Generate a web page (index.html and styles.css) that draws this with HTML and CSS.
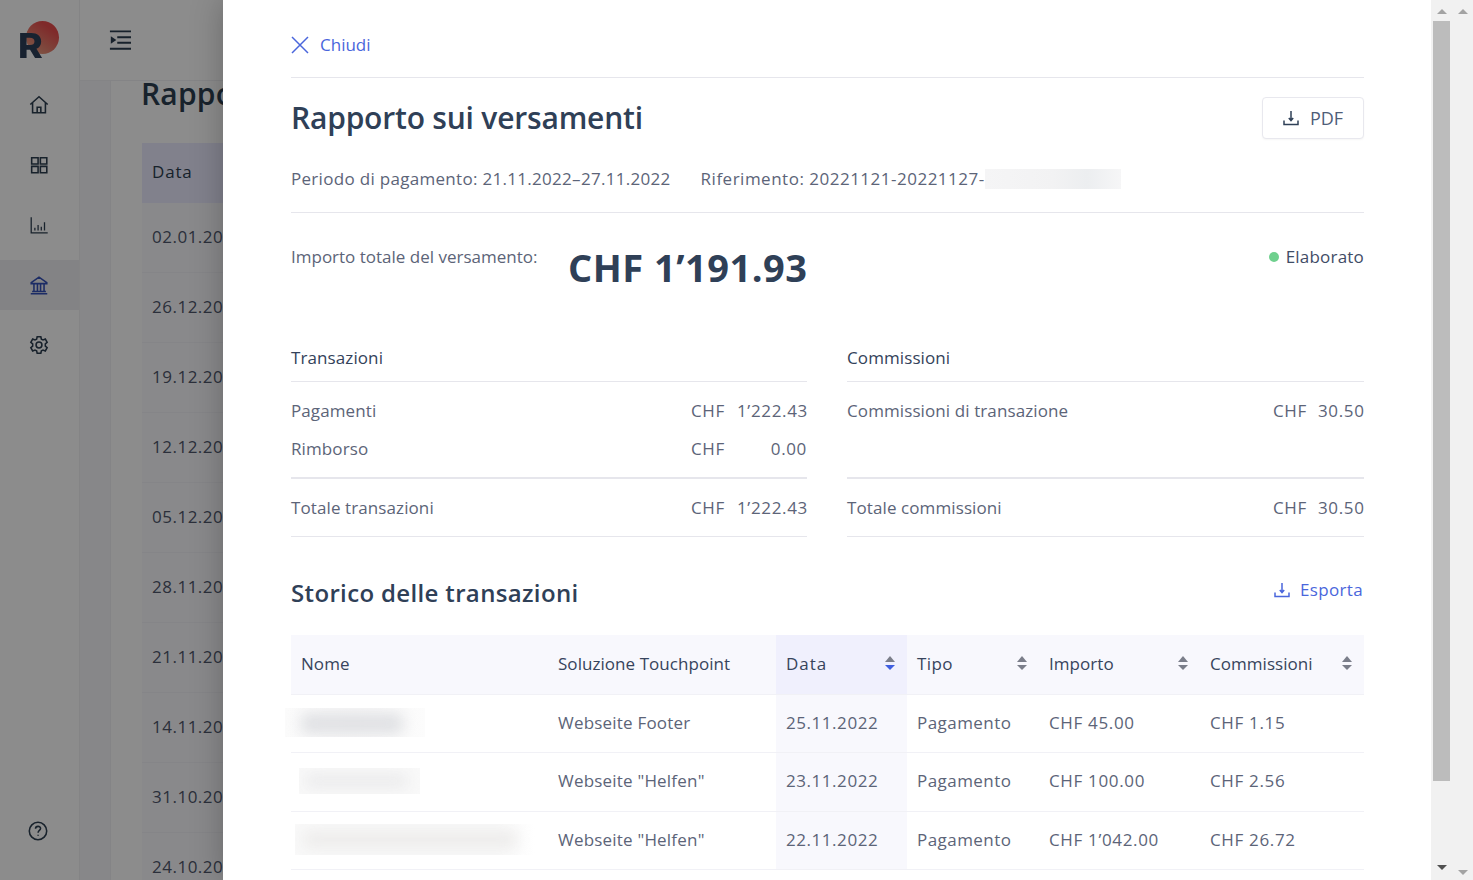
FILE: index.html
```html
<!DOCTYPE html>
<html lang="it">
<head>
<meta charset="utf-8">
<title>Rapporto sui versamenti</title>
<link rel="stylesheet" href="styles.css">
</head>
<body>
<div class="app">
  <aside class="sidebar">
    <div class="logo"><span class="logo-sun"></span><span class="logo-r">R</span></div>
    <a class="nav-item"><svg viewBox="0 0 24 24" class="nav-icon"><path d="M2.500 11.500 12 3l9.500 8.500M5 9.500V20.500h14V9.500M10 20.500v-6h4v6"/></svg></a>
    <a class="nav-item"><svg viewBox="0 0 24 24" class="nav-icon"><path d="M4 4h7v7H4zM13.500 4h7v7h-7zM4 13.500h7v7H4zM13.500 13.500h7v7h-7z"/></svg></a>
    <a class="nav-item"><svg viewBox="0 0 24 24" class="nav-icon thin"><path d="M3.500 3.500v17h18M7.500 18v-3M11 18v-6M14.500 18v-4M18 18V9"/></svg></a>
    <a class="nav-item active"><svg viewBox="0 0 24 24" class="nav-icon"><path d="M3.500 9.500 12 3.500l8.500 6v1h-17zM3 21.500h18M4.500 19h15M6.500 11v8M10.300 11v8M13.700 11v8M17.500 11v8"/></svg></a>
    <a class="nav-item"><svg viewBox="0 0 24 24" class="nav-icon"><circle cx="12" cy="12" r="3.200"/><path d="M10 3h4l.6 2.600 1.800.9 2.500-1 2 3.500-2 1.800v2.400l2 1.800-2 3.500-2.500-1-1.800.9L14 21h-4l-.6-2.600-1.800-.9-2.500 1-2-3.500 2-1.800v-2.400l-2-1.800 2-3.500 2.500 1 1.800-.9z"/></svg></a>
    <a class="nav-item help"><svg viewBox="0 0 24 24" class="nav-icon"><circle cx="12" cy="12" r="9.500"/><path d="M9.300 9.500c0-3.400 5.500-3.400 5.500-.2 0 2-2.700 2.200-2.700 4.500M12.100 16v1.200"/></svg></a>
  </aside>
  <div class="back">
    <header class="topbar"><svg viewBox="0 0 24 24" class="menu-icon"><path d="M1 2.500h23M9 9h15M9 15h15M1 21.500h23"/><path class="solid" d="M2 8l6 4-6 4z"/></svg></header>
    <div class="back-body">
      <div class="gutter"></div>
      <main class="back-main">
        <h1 class="back-title">Rapporti di versamento</h1>
        <div class="back-head">Data</div>
        <div class="back-cell">02.01.2023</div>
        <div class="back-cell">26.12.2022</div>
        <div class="back-cell">19.12.2022</div>
        <div class="back-cell">12.12.2022</div>
        <div class="back-cell">05.12.2022</div>
        <div class="back-cell">28.11.2022</div>
        <div class="back-cell">21.11.2022</div>
        <div class="back-cell">14.11.2022</div>
        <div class="back-cell">31.10.2022</div>
        <div class="back-cell">24.10.2022</div>
      </main>
    </div>
  </div>
</div>
<div class="overlay"></div>
<section class="drawer">
  <div class="drawer-close">
    <svg viewBox="0 0 18 18" class="close-icon"><path d="M1 1l16 16M17 1 1 17"/></svg>
    <span>Chiudi</span>
  </div>
  <div class="title-row">
    <h1 class="title">Rapporto sui versamenti</h1>
    <button class="pdf-btn"><svg viewBox="0 0 16 16" class="dl-icon"><path d="M8 1v9M5.800 8 8 10.500 10.200 8M1 10.500v4h14v-4"/></svg><span>PDF</span></button>
  </div>
  <div class="meta">
    <span>Periodo di pagamento: 21.11.2022–27.11.2022</span>
    <span class="meta-ref">Riferimento: 20221121-20221127-<span class="redact-ref"><i></i></span></span>
  </div>
  <div class="amount-row">
    <span class="amount-label">Importo totale del versamento:</span>
    <strong class="amount">CHF 1’191.93</strong>
    <span class="status"><i class="dot"></i>Elaborato</span>
  </div>
  <div class="summary">
    <div class="sum-col">
      <h2 class="sum-title">Transazioni</h2>
      <div class="sum-row first"><span>Pagamenti</span><span class="money"><span>CHF</span><span>1’222.43</span></span></div>
      <div class="sum-row"><span>Rimborso</span><span class="money"><span>CHF</span><span>0.00</span></span></div>
      <div class="sum-total"><span>Totale transazioni</span><span class="money"><span>CHF</span><span>1’222.43</span></span></div>
    </div>
    <div class="sum-col">
      <h2 class="sum-title">Commissioni</h2>
      <div class="sum-row first"><span>Commissioni di transazione</span><span class="money short"><span>CHF</span><span>30.50</span></span></div>
      <div class="sum-row"></div>
      <div class="sum-total"><span>Totale commissioni</span><span class="money short"><span>CHF</span><span>30.50</span></span></div>
    </div>
  </div>
  <div class="history-head">
    <h2 class="history-title">Storico delle transazioni</h2>
    <a class="export"><svg viewBox="0 0 16 16" class="dl-icon"><path d="M8 1v9M5.800 8 8 10.500 10.200 8M1 10.500v4h14v-4"/></svg><span>Esporta</span></a>
  </div>
  <table class="tx">
    <colgroup><col class="c1"><col class="c2"><col class="c3"><col class="c4"><col class="c5"><col class="c6"></colgroup>
    <thead>
      <tr>
        <th>Nome</th>
        <th>Soluzione Touchpoint</th>
        <th class="sorted"><div class="th-in"><span class="wide">Data</span><span class="sort on"></span></div></th>
        <th><div class="th-in"><span class="mid">Tipo</span><span class="sort"></span></div></th>
        <th><div class="th-in">Importo<span class="sort"></span></div></th>
        <th><div class="th-in">Commissioni<span class="sort"></span></div></th>
      </tr>
    </thead>
    <tbody>
      <tr>
        <td><div class="redact r1"><i></i></div></td><td>Webseite Footer</td><td class="sorted num">25.11.2022</td><td class="kind">Pagamento</td><td class="num">CHF 45.00</td><td class="num">CHF 1.15</td>
      </tr>
      <tr>
        <td><div class="redact r2"><i></i></div></td><td>Webseite "Helfen"</td><td class="sorted num">23.11.2022</td><td class="kind">Pagamento</td><td class="num">CHF 100.00</td><td class="num">CHF 2.56</td>
      </tr>
      <tr>
        <td><div class="redact r3"><i></i></div></td><td>Webseite "Helfen"</td><td class="sorted num">22.11.2022</td><td class="kind">Pagamento</td><td class="num">CHF 1’042.00</td><td class="num">CHF 26.72</td>
      </tr>
    </tbody>
  </table>
</section>
<div class="scrollbars">
  <div class="bar"><span class="arrow up"></span><span class="thumb"></span><span class="arrow down dark"></span></div>
  <div class="bar"><span class="arrow up"></span><span class="spacer"></span><span class="arrow down"></span></div>
</div>
</body>
</html>
```

FILE: styles.css
```css
* { box-sizing: border-box; }
html, body { margin: 0; height: 100%; }
body {
  width: 1473px; height: 880px; overflow: hidden; position: relative;
  font-family: "Open Sans", "Liberation Sans", sans-serif;
  font-size: 17px; color: #5c6478; background: #fff; letter-spacing: .2px;
}
h1, h2 { margin: 0; }

/* page behind the drawer */
.app { display: flex; height: 880px; width: 223px; overflow: hidden; }
.sidebar { flex: 0 0 80px; border-right: 1px solid #f0f0f2; display: flex; flex-direction: column; background: #fff; }
.logo { height: 75px; position: relative; }
.logo-sun { position: absolute; left: 26px; top: 21px; width: 33px; height: 33px; border-radius: 50%; background: linear-gradient(215deg, #e84e4e 25%, #e4a585 95%); }
.logo-r { position: absolute; left: 18px; top: 24px; font: 800 34px/44px Inter, sans-serif; color: #2c3e58; transform: scaleX(1.1); transform-origin: left center; }
.nav-item { height: 60px; display: flex; align-items: center; justify-content: center; padding-right: 1px; color: #2d3e50; }
.nav-item.active { background: #efeff2; color: #3450b8; height: 50px; margin: 5px 0; }
.nav-item.help { margin-top: auto; margin-bottom: 19px; height: 60px; padding-right: 3px; }
.nav-icon { width: 22px; height: 22px; fill: none; stroke: currentColor; stroke-width: 1.700; }
.nav-icon.thin { stroke-width: 1.400; }
.back { width: 143px; flex: none; display: flex; flex-direction: column; }
.topbar { height: 81px; flex: none; border-bottom: 1px solid #f0f0f4; padding: 29px 0 0 28px; }
.menu-icon { display: block; width: 24px; height: 22px; fill: none; stroke: #2d3e50; stroke-width: 2; }
.menu-icon .solid { fill: #2d3e50; stroke: none; }
.back-body { display: flex; flex: 1; min-height: 0; }
.gutter { width: 31px; flex: none; background: #f6f6f9; border-right: 1px solid #f0f0f4; }
.back-main { flex: 1; min-width: 0; padding: 0 0 0 31px; overflow: hidden; white-space: nowrap; }
.back-title { font-size: 30px; line-height: 42px; font-weight: 600; color: #2d3e50; margin: -8px 0 28px -1px; }
.back-head { height: 60px; background: #ebebff; color: #2d3e50; padding-left: 10px; line-height: 58px; letter-spacing: .8px; }
.back-cell { height: 70px; background: #fafafd; padding-left: 10px; line-height: 68px; margin-right: -20px; letter-spacing: .5px; color: #4f576c; border-bottom: 1px solid #f2f2f8; }
.overlay { position: absolute; left: 0; top: 0; width: 223px; height: 880px; background: rgba(0, 0, 0, .45); }

/* drawer */
.drawer {
  position: absolute; left: 223px; top: 0; width: 1208px; height: 880px; overflow: hidden;
  padding: 0 67px 0 68px; background: #fff; box-shadow: 0 0 30px rgba(0, 0, 0, .25);
}
.drawer-close { height: 78px; padding-top: 33px; border-bottom: 1px solid #e6e6ec; display: flex; align-items: flex-start; gap: 11px; color: #4a66dc; line-height: 24px; letter-spacing: 0; }
.close-icon { width: 18px; height: 18px; margin-top: 3px; fill: none; stroke: #4a66dc; stroke-width: 1.500; }
.title-row { display: flex; justify-content: space-between; align-items: center; height: 42px; margin-top: 19px; }
.title { font-size: 30px; font-weight: 600; line-height: 42px; color: #2f4057; letter-spacing: -.2px; }
.pdf-btn { width: 102px; height: 42px; border: 1px solid #e8e8ee; border-radius: 4px; background: #fff; box-shadow: 0 1px 2px rgba(0, 0, 0, .04); display: flex; align-items: center; justify-content: center; gap: 11px; font: inherit; font-size: 18px; color: #4f5d78; padding: 0; }
.dl-icon { width: 16px; height: 16px; fill: none; stroke: #2f4057; stroke-width: 1.500; }
.meta { box-sizing: content-box; height: 22px; margin-top: 29px; padding-bottom: 22px; display: flex; gap: 30px; line-height: 22px; border-bottom: 1px solid #e6e6ec; letter-spacing: .3px; }
.meta-ref { display: flex; letter-spacing: .5px; }
.redact-ref { display: block; width: 136px; height: 20px; overflow: hidden; margin-top: 1px; }
.redact-ref i { display: block; height: 100%; background: linear-gradient(90deg, #f5f5f6, #f2f2f3 50%, #eceef0 75%, #f6f6f7); }
.amount-row { display: flex; align-items: flex-start; height: 112px; padding-top: 32px; line-height: 24px; }
.amount-label { width: 277px; flex: none; letter-spacing: 0; }
.amount { font-size: 38px; line-height: 46px; font-weight: 700; color: #2f4057; margin-top: -1px; letter-spacing: .5px; }
.status { margin-left: auto; color: #3f4c66; display: flex; align-items: center; gap: 7px; }
.dot { width: 10px; height: 10px; border-radius: 50%; background: #6fd08e; }
.summary { display: grid; grid-template-columns: 516px 517px; column-gap: 40px; margin-top: 10px; letter-spacing: .1px; }
.sum-title { font-size: 17px; font-weight: 400; color: #33425a; height: 47px; line-height: 24px; padding-top: 11px; border-bottom: 1px solid #e6e6ec; }
.sum-row { display: flex; justify-content: space-between; height: 38px; line-height: 24px; padding-top: 7px; }
.sum-row.first { margin-top: 10px; }
.sum-total { display: flex; justify-content: space-between; height: 60px; margin-top: 9px; line-height: 24px; padding-top: 17px; border-top: 2px solid #e6e6ec; border-bottom: 1px solid #e6e6ec; }
.money { display: grid; grid-template-columns: 46px 70px; letter-spacing: .65px; }
.money.short { grid-template-columns: 45px 46px; }
.money span:last-child { text-align: right; }
.history-head { display: flex; justify-content: space-between; align-items: flex-start; height: 98px; padding-top: 39px; }
.history-title { font-size: 24px; font-weight: 600; line-height: 34px; color: #2f4057; letter-spacing: .35px; }
.export { display: flex; align-items: center; gap: 10px; color: #4a66dc; line-height: 24px; margin-top: 2px; padding-right: 1px; letter-spacing: .35px; }
.export .dl-icon { stroke: #4a66dc; }
.tx { width: 1073px; table-layout: fixed; border-collapse: collapse; }
.c1 { width: 257px; } .c2 { width: 228px; } .c3 { width: 131px; } .c4 { width: 132px; } .c5 { width: 161px; } .c6 { width: 164px; }
.tx th { height: 59px; background: #f8f8fd; font-weight: 400; color: #37445c; text-align: left; padding: 0 10px 2px; border-bottom: 1px solid #f1f1f6; letter-spacing: .05px; }
.tx td { height: 58.500px; padding: 0 10px 2px; border-bottom: 1px solid #f1f1f6; white-space: nowrap; }
.tx th.sorted { background: #f0f0fd; }
.tx td.sorted { background: #f8f8fd; }
.tx td.num { letter-spacing: .65px; }
.tx td.sorted.num { letter-spacing: .55px; }
.tx td.kind { letter-spacing: .45px; }
.wide { letter-spacing: 1px; }
.mid { letter-spacing: .4px; }
.th-in { display: flex; justify-content: space-between; align-items: center; padding-right: 2px; }
.sort { position: relative; width: 10px; height: 14px; flex: none; }
.sort::before, .sort::after { content: ""; position: absolute; left: 0; width: 0; height: 0; border-left: 5px solid transparent; border-right: 5px solid transparent; }
.sort::before { top: 0; border-bottom: 6px solid #7b7e8a; }
.sort::after { bottom: 0; border-top: 5px solid #7b7e8a; }
.sort.on::after { border-top-color: #3f5ee0; }
.redact { overflow: hidden; position: relative; background: #f9f9f9; }
.redact i { display: block; position: absolute; background: #e0e1e4; filter: blur(7px); border-radius: 6px; }
.r1 { width: 140px; height: 29px; margin-left: -16px; background: linear-gradient(90deg, #fbfbfb, #f8f8f8 50%, #fcfcfc); }
.r1 i { left: 16px; right: 22px; top: 5px; bottom: 3px; }
.r2 { width: 121px; height: 26px; margin-left: -2px; }
.r2 i { left: 6px; right: 12px; top: 5px; bottom: 5px; background: #ececed; }
.r3 { width: 240px; height: 31px; margin-left: -6px; background: linear-gradient(90deg, #f9f9f9, #f9f9f9 85%, #fff); }
.r3 i { left: 8px; right: 18px; top: 6px; bottom: 6px; background: #eeedec; }

/* scrollbars */
.scrollbars { position: absolute; left: 1431px; top: 0; width: 42px; height: 880px; display: flex; background: #f1f1f1; }
.bar { width: 21px; height: 880px; display: flex; flex-direction: column; align-items: center; padding-top: 9px; }
.bar:first-child .thumb { margin-top: 7px; }
.thumb { width: 17px; height: 760px; background: #bcbcbc; flex: none; margin-bottom: 84px; }
.spacer { flex: 1; }
.arrow { width: 0; height: 0; flex: none; border-left: 5px solid transparent; border-right: 5px solid transparent; }
.arrow.up { border-bottom: 5px solid #a3a3a3; }
.arrow.down { border-top: 5px solid #a3a3a3; margin-bottom: 5px; }
.arrow.down.dark { border-top-color: #505050; }
```
